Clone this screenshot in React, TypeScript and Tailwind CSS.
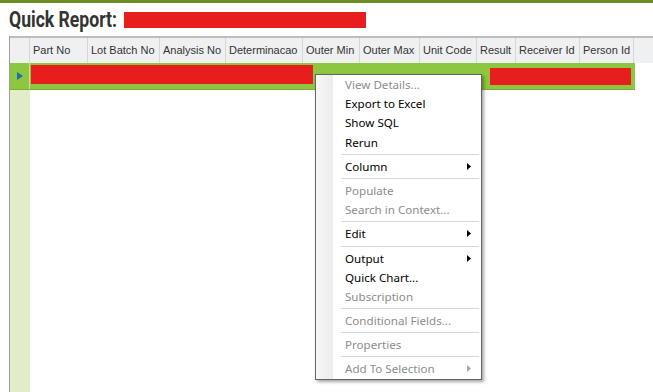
import React from "react";

const columns = [
  { label: "Part No", w: "w-[58px]" },
  { label: "Lot Batch No", w: "w-[72px]" },
  { label: "Analysis No", w: "w-[66px]" },
  { label: "Determinacao", w: "w-[77px]" },
  { label: "Outer Min", w: "w-[57px]" },
  { label: "Outer Max", w: "w-[60px]" },
  { label: "Unit Code", w: "w-[57px]" },
  { label: "Result", w: "w-[39px]" },
  { label: "Receiver Id", w: "w-[64px]" },
  { label: "Person Id", w: "w-[54px]" },
];

type Item = { label?: string; disabled?: boolean; sub?: boolean; sep?: boolean };

const menu: Item[] = [
  { label: "View Details...", disabled: true },
  { label: "Export to Excel" },
  { label: "Show SQL" },
  { label: "Rerun" },
  { sep: true },
  { label: "Column", sub: true },
  { sep: true },
  { label: "Populate", disabled: true },
  { label: "Search in Context...", disabled: true },
  { sep: true },
  { label: "Edit", sub: true },
  { sep: true },
  { label: "Output", sub: true },
  { label: "Quick Chart..." },
  { label: "Subscription", disabled: true },
  { sep: true },
  { label: "Conditional Fields...", disabled: true },
  { sep: true },
  { label: "Properties", disabled: true },
  { sep: true },
  { label: "Add To Selection", disabled: true, sub: true },
];

function Arrow({ disabled }: { disabled?: boolean }) {
  return (
    <svg width="4" height="7" viewBox="0 0 4 7" className="absolute right-[10px] top-[6px]">
      <path d="M0 0 L4 3.5 L0 7 Z" fill={disabled ? "#a8a8a8" : "#000"} />
    </svg>
  );
}

function ContextMenu() {
  return (
    <div className="absolute left-[315px] top-[74px] w-[167px] border border-[#646464] bg-white shadow-[2px_2px_3px_rgba(0,0,0,0.35)] font-['Noto_Sans',sans-serif] text-[11.6px]">
      <div className="absolute left-0 top-0 bottom-0 w-[18px] bg-gradient-to-r from-[#f7f7f7] to-[#ececec] border-r border-white" />
      {menu.map((it, i) =>
        it.sep ? (
          <div key={i} className="h-[5px] flex items-center pl-[25px] pr-[2px]">
            <div className="h-px w-full bg-[#d7d7d7]" />
          </div>
        ) : (
          <div
            key={i}
            className={`relative h-[19.2px] leading-[19.2px] pl-[29px] ${it.disabled ? "text-[#8c8c8c]" : "text-black"}`}
          >
            {it.label}
            {it.sub && <Arrow disabled={it.disabled} />}
          </div>
        )
      )}
    </div>
  );
}

export default function App() {
  return (
    <div className="relative w-[653px] h-[392px] bg-white overflow-hidden flex flex-col">
      <div className="h-[3px] bg-[#6b8b23] shrink-0" />
      <div className="h-[33px] shrink-0 flex items-center pl-[9px]">
        <div className="w-[115px] shrink-0 whitespace-nowrap">
          <span className="inline-block origin-left scale-x-[0.8] font-['Roboto',sans-serif] font-bold text-[22px] text-[#333]">
            Quick Report:
          </span>
        </div>
        <div className="w-[242px] h-[16px] bg-[#e81e1e]" />
      </div>
      <div className="flex-1 flex flex-col ml-[9px] border-l border-[#a0a0a0] font-['Liberation_Sans',Arial,sans-serif] text-[11px]">
        <div className="h-[27px] shrink-0 flex border-t-2 border-[#bdbdbd] bg-[#eff0f1] text-[#333]">
          <div className="w-[20px] border-r border-[#d6d6d6]" />
          {columns.map((c) => (
            <div key={c.label} className={`${c.w} border-r border-[#d6d6d6] pl-[3px] flex items-center whitespace-nowrap`}>
              {c.label}
            </div>
          ))}
        </div>
        <div className="h-[27px] shrink-0 w-[625px] flex bg-[#8dc63f] border-b border-[#7fae3a]">
          <div className="w-[20px] border-r border-[#c6e29c] flex items-center justify-center">
            <svg width="6" height="8" viewBox="0 0 6 8">
              <path d="M0 0 L6 4 L0 8 Z" fill="#1f6fb5" />
            </svg>
          </div>
          <div className="flex-1 flex items-start">
            <div className="ml-[1px] mt-[2px] w-[282px] h-[19px] bg-[#e81e1e]" />
            <div className="ml-[177px] mt-[5px] w-[141px] h-[17px] bg-[#e81e1e]" />
          </div>
        </div>
        <div className="flex-1 flex">
          <div className="w-[20px] bg-[#e2ecc9]" />
        </div>
      </div>
      <ContextMenu />
    </div>
  );
}
